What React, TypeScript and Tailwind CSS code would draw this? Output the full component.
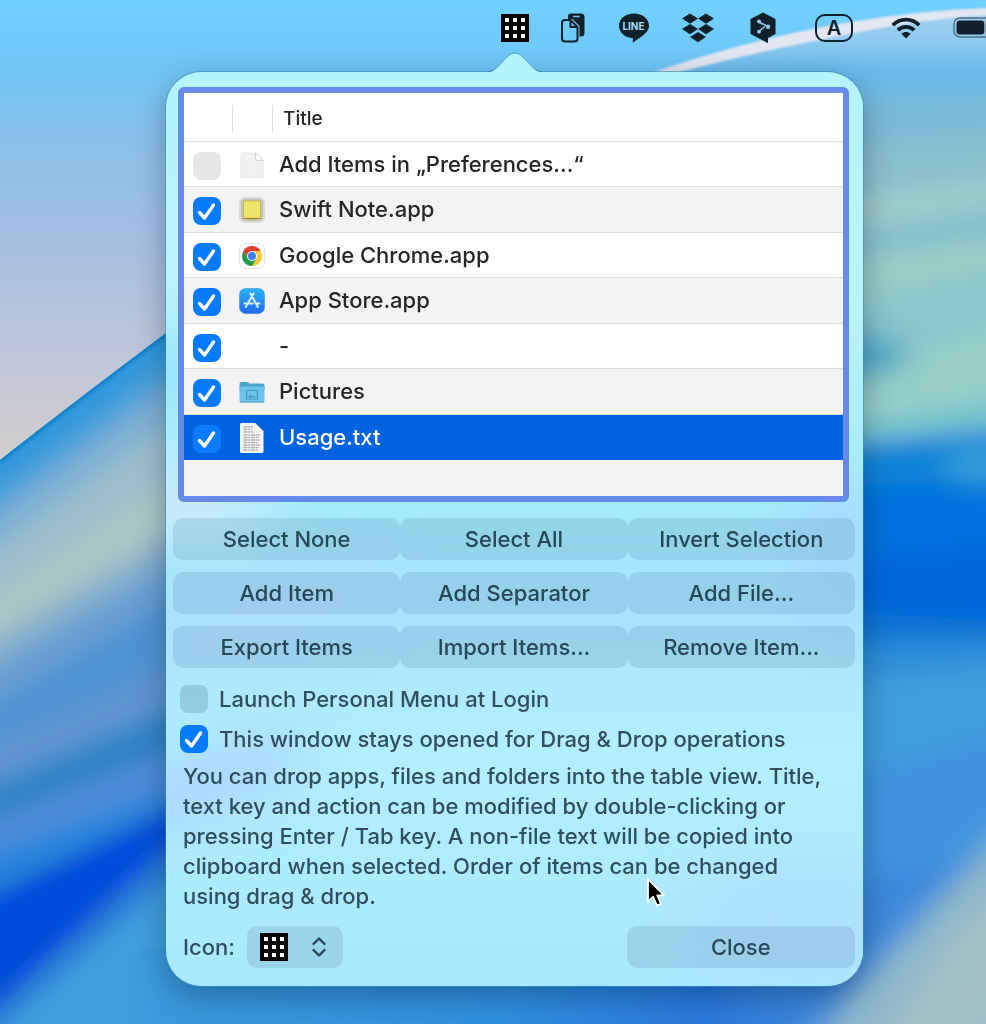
import { useState } from "react";

type Kind = "blank" | "note" | "chrome" | "store" | "none" | "folder" | "text";
type Item = { id: number; title: string; kind: Kind; enabled: boolean };

const ITEMS: Item[] = [
  { id: 1, title: "Add Items in „Preferences...“", kind: "blank", enabled: false },
  { id: 2, title: "Swift Note.app", kind: "note", enabled: true },
  { id: 3, title: "Google Chrome.app", kind: "chrome", enabled: true },
  { id: 4, title: "App Store.app", kind: "store", enabled: true },
  { id: 5, title: "-", kind: "none", enabled: true },
  { id: 6, title: "Pictures", kind: "folder", enabled: true },
  { id: 7, title: "Usage.txt", kind: "text", enabled: true },
];

// each band covers everything below its upper edge: [colour, y at the left, y at the right]
const LEFT_BANDS: [string, number, number][] = [
  ["#4a9fd9", 478, 356],
  ["#7fb1d4", 508, 386],
  ["#9bbfce", 545, 425],
  ["#a9c7c6", 590, 480],
  ["#88b1cd", 634, 536],
  ["#689fd1", 662, 566],
  ["#4f93d0", 700, 604],
  ["#5f95cf", 735, 668],
  ["#2f83c6", 782, 712],
  ["#4f8bd8", 816, 752],
  ["#2585dc", 850, 792],
  ["#004cda", 890, 812],
  ["#2c80d8", 1004, 852],
  ["#419fdc", 1030, 884],
];

const RIGHT_BANDS: [string, number, number][] = [
  ["#68b9ea", 62, 62],
  ["#79bad8", 92, 88],
  ["#8abfcf", 140, 132],
  ["#a0cccb", 196, 180],
  ["#84c0cf", 232, 208],
  ["#9ccec6", 258, 240],
  ["#8bc7ce", 300, 272],
  ["#98cfc8", 376, 330],
  ["#78c5d0", 420, 400],
  ["#0a84d8", 444, 430],
  ["#0072de", 486, 480],
  ["#0068da", 560, 545],
  ["#0f76d6", 612, 622],
  ["#2f8fd8", 644, 640],
  ["#419edc", 680, 668],
  ["#3f93e0", 780, 740],
  ["#3c88dc", 880, 860],
];

function Wallpaper() {
  return (
    <svg className="absolute inset-0 -z-10 h-full w-full" viewBox="0 0 986 1024" preserveAspectRatio="none" aria-hidden="true">
      <defs>
        <linearGradient id="sky" x1="0" y1="0" x2="0" y2="470" gradientUnits="userSpaceOnUse">
          <stop offset="0" stopColor="#70d1ff" />
          <stop offset=".14" stopColor="#70c6f5" />
          <stop offset=".32" stopColor="#8ec0e8" />
          <stop offset=".55" stopColor="#a9c0e1" />
          <stop offset=".76" stopColor="#bfc7da" />
          <stop offset="1" stopColor="#d6cfcb" />
        </linearGradient>
        <linearGradient id="under" x1="0" y1="0" x2="0" y2="100" gradientUnits="userSpaceOnUse">
          <stop offset="0" stopColor="#a8d6f2" />
          <stop offset=".4" stopColor="#8fcaf0" />
          <stop offset="1" stopColor="#68b9ea" />
        </linearGradient>
        <linearGradient id="floor" x1="110" y1="0" x2="986" y2="0" gradientUnits="userSpaceOnUse">
          <stop offset="0" stopColor="#3a9adc" stopOpacity="0" />
          <stop offset=".06" stopColor="#3a9adc" />
          <stop offset=".45" stopColor="#2f90de" />
          <stop offset=".68" stopColor="#2a78dc" />
          <stop offset=".85" stopColor="#3c82d8" stopOpacity="0" />
        </linearGradient>
        <filter id="soft" x="-10%" y="-10%" width="120%" height="120%">
          <feGaussianBlur stdDeviation="11" />
        </filter>
        <filter id="haze" x="-100%" y="-200%" width="300%" height="500%">
          <feGaussianBlur stdDeviation="15" />
        </filter>
        <filter id="fine">
          <feGaussianBlur stdDeviation="1" />
        </filter>
        <clipPath id="leftHill">
          <path d="M0 460Q70 405 166 333L520 90V1024H0Z" />
        </clipPath>
        <clipPath id="rightHill">
          <path d="M520 110Q660 72 742 50Q860 20 986 14V1024H520Z" />
        </clipPath>
      </defs>
      <rect width="986" height="1024" fill="url(#sky)" />
      <g clipPath="url(#leftHill)">
        <rect y="80" width="530" height="944" fill="#2b97dd" />
        <g filter="url(#soft)">
          {LEFT_BANDS.map(([fill, a, b]) => (
            <polygon key={fill + a} fill={fill} points={`-165,${a * 2 - b} 0,${a} 165,${b} 600,${b - (a - b)} 600,1120 -165,1120`} />
          ))}
        </g>
        <path d="M0 461Q70 406 166 334" fill="none" stroke="#1584cc" strokeWidth="5" filter="url(#fine)" />
      </g>
      <g clipPath="url(#rightHill)">
        <rect x="500" width="486" height="1024" fill="url(#under)" />
        <g filter="url(#soft)">
          {RIGHT_BANDS.map(([fill, a, b]) => (
            <polygon key={fill + a} fill={fill} points={`500,${a + 10} 850,${a} 986,${b} 1100,${b} 1100,1120 500,1120`} />
          ))}
        </g>
        <ellipse cx="862" cy="356" rx="46" ry="14" fill="#2f90c4" opacity=".8" filter="url(#haze)" />
        <ellipse cx="990" cy="465" rx="50" ry="20" fill="#5ab4dc" opacity=".6" filter="url(#haze)" />
        <path d="M740 1110L840 1000L1000 830H1120V1110Z" fill="#8fb8cd" filter="url(#haze)" />
        <path d="M860 1080L960 930L1060 850V1000Z" fill="#a2c4c6" filter="url(#haze)" />
      </g>
      <rect x="110" y="950" width="876" height="74" fill="url(#floor)" />
      <path d="M640 77Q745 40 845 23Q920 10 990 8V15Q920 19 845 35Q755 52 680 72Z" fill="#e2e7f3" filter="url(#fine)" />
    </svg>
  );
}

function GridIcon() {
  return (
    <svg width="28" height="28" viewBox="0 0 28 28" aria-hidden="true">
      <rect width="28" height="28" fill="#000" />
      {[4, 12, 20].map((y) =>
        [4, 12, 20].map((x) => <rect key={`${x}-${y}`} x={x} y={y} width="4" height="4" fill="#fff" />)
      )}
    </svg>
  );
}

function MenuBar() {
  return (
    <header className="flex h-14 items-center justify-end gap-7 text-[#10202c]">
      <GridIcon />
      <span className="flex w-[31px] justify-center">
        <svg width="24" height="30" viewBox="0 0 24 30" aria-hidden="true">
          <path d="M10 .5H20Q23.500 .5 23.500 4V20Q23.500 23.500 20 23.500H18.500V13L11.500 6H7V3.500Q7 .5 10 .5Z" fill="currentColor" />
          <path d="M12.500 3.500H18" stroke="#6fc8f6" strokeWidth="1.600" strokeLinecap="round" />
          <path d="M10.500 7.500L16.500 13.500H10.500Z" fill="#6fc8f6" />
          <path d="M4 7H9.500L16.500 14V25.500Q16.500 28.500 13.500 28.500H4Q1 28.500 1 25.500V10Q1 7 4 7ZM9.500 7V14H16.500" fill="none" stroke="currentColor" strokeWidth="2" strokeLinejoin="round" />
        </svg>
      </span>
      <span className="relative flex w-[35px] justify-center">
        <svg width="32" height="30" viewBox="0 0 32 30" aria-hidden="true">
          <path d="M16 .5C24.300 .5 31 5.900 31 12.700C31 18 26 22 21 25.200L15.500 29.300Q14.500 29.700 14.700 28.500L15 25.200C7 24.800 1 19.400 1 12.700C1 5.900 7.700 .5 16 .5Z" fill="currentColor" />
        </svg>
        <span className="absolute inset-x-0 top-[7px] text-center text-[10px] leading-3 font-bold text-[#a5dcf8]">LINE</span>
      </span>
      <span className="flex w-[38px] justify-center">
        <svg width="34" height="30" viewBox="0 0 34 30" fill="currentColor" aria-hidden="true">
          <path d="M9 .5L17 5.600L9 10.700L1 5.600ZM25 .5L33 5.600L25 10.700L17 5.600ZM9 11L17 16.100L9 21.200L1 16.100ZM25 11L33 16.100L25 21.200L17 16.100ZM17 19L25 24.100L17 29.200L9 24.100Z" />
        </svg>
      </span>
      <span className="flex w-9 justify-center">
        <svg width="26" height="32" viewBox="0 0 26 32" aria-hidden="true">
          <path d="M13 .5L25.500 7V22L18 26V31.300L13 28.500L.5 22V7Z" fill="currentColor" />
          <path d="M8 9.500L12.500 12M15 14.500L8 19.800" fill="none" stroke="#8fcbf0" strokeWidth="1.500" />
          <path d="M12 11.500L18 14.700" stroke="#8fcbf0" strokeWidth="1.500" />
          <g fill="#8fcbf0">
            <circle cx="9" cy="9.500" r="1.900" />
            <circle cx="18" cy="14.700" r="2.200" />
            <circle cx="9" cy="19.800" r="1.900" />
          </g>
        </svg>
      </span>
      <span className="flex w-[50px] justify-center">
        <span className="flex h-7 w-[38px] items-center justify-center rounded-[10px] border-2 border-current text-[20px] leading-6 font-semibold">A</span>
      </span>
      <span className="flex w-[38px] justify-center">
        <svg width="30" height="24" viewBox="0 0 30 24" fill="none" stroke="currentColor" strokeWidth="3.800" aria-hidden="true">
          <path d="M1.800 9.200C9 1.800 21 1.800 28.200 9.200" />
          <path d="M6.800 14.200C11.500 9.800 18.500 9.800 23.200 14.200" />
          <path d="M15 22.500L10.300 17.800C13 15.500 17 15.500 19.700 17.800Z" fill="currentColor" stroke="none" />
        </svg>
      </span>
      <svg width="33" height="22" viewBox="0 0 33 22" aria-hidden="true">
        <rect x="1" y="1" width="48" height="19" rx="6" fill="none" stroke="#4d7085" strokeWidth="1.500" />
        <rect x="3.500" y="3.500" width="28" height="14" rx="3.500" fill="currentColor" />
        <rect x="31.500" y="3.500" width="2" height="14" fill="#8eb0c2" />
      </svg>
    </header>
  );
}

function ItemIcon({ kind }: { kind: Kind }) {
  switch (kind) {
    case "blank":
      return (
        <svg width="26" height="28" viewBox="0 0 26 28" aria-hidden="true">
          <path d="M4 2H17L24 9V25Q24 26.500 22.500 26.500H3.500Q2 26.500 2 25V4Q2 2 4 2Z" fill="#f1f1f1" stroke="#e2e2e2" strokeWidth=".8" />
          <path d="M16.500 2V8Q16.500 9.500 18 9.500H24Z" fill="#fff" stroke="#c9c9c9" strokeWidth=".8" />
        </svg>
      );
    case "note":
      return (
        <svg width="26" height="28" viewBox="0 0 26 28" aria-hidden="true">
          <rect x="0" y="1" width="26" height="26" rx="6" fill="#dcdad9" />
          <rect x="2" y="3" width="22" height="22" rx="4" fill="#c4c1bb" />
          <rect x="4.500" y="5" width="17" height="17.500" fill="#f2e468" stroke="#cbb94c" />
          <path d="M4.500 22.500H21.500" stroke="#a08c20" strokeWidth="1.200" />
        </svg>
      );
    case "chrome":
      return (
        <svg width="26" height="28" viewBox="0 0 26 28" aria-hidden="true">
          <rect x=".5" y="1.500" width="25" height="25" rx="6" fill="#fff" stroke="#e4e4e4" />
          <path d="M13 14L4.340 9A10 10 0 0 1 21.660 9Z" fill="#e33b2e" />
          <path d="M13 14L21.660 9A10 10 0 0 1 13 24Z" fill="#fcc934" />
          <path d="M13 9H21.660L17.330 16.500Z" fill="#fcc934" />
          <path d="M8.670 16.500L4.340 9L13 9Z" fill="#e33b2e" />
          <path d="M4.340 9L8.670 16.500H17.330L13 24A10 10 0 0 1 4.340 9Z" fill="#1e9c4c" />
          <circle cx="13" cy="14" r="5" fill="#fff" />
          <circle cx="13" cy="14" r="4" fill="#3f7de8" />
        </svg>
      );
    case "store":
      return (
        <svg width="26" height="28" viewBox="0 0 26 28" aria-hidden="true">
          <defs>
            <linearGradient id="storeFill" x1="0" y1="0" x2="0" y2="1">
              <stop offset="0" stopColor="#2bb4f8" />
              <stop offset="1" stopColor="#2168ee" />
            </linearGradient>
          </defs>
          <rect x=".5" y="1.500" width="25" height="25" rx="6" fill="url(#storeFill)" stroke="#3b8fe0" strokeWidth=".6" />
          <path d="M11.500 6.500L18.800 20M14.500 6.500L8 17.800M5.500 16.500H14M17.500 16.500H20.500M6.800 20L7.300 19.200" stroke="#d9f0ff" strokeWidth="2" strokeLinecap="round" />
        </svg>
      );
    case "folder":
      return (
        <svg width="26" height="28" viewBox="0 0 26 28" aria-hidden="true">
          <path d="M.5 6Q.5 4 2.500 4H8Q9.500 4 10.500 5.500H23.500Q25.500 5.500 25.500 7.500V12H.5Z" fill="#4aa5cc" />
          <path d="M.5 8.500H25.500V22.500Q25.500 24.500 23.500 24.500H2.500Q.5 24.500 .5 22.500Z" fill="#6cc5e8" />
          <path d="M1 24H25" stroke="#4aa5cc" />
          <rect x="7.500" y="12.500" width="11" height="8.500" rx="1" fill="none" stroke="#3f9cc6" strokeWidth="1.200" />
          <path d="M8.500 19.500L11.500 16.500L13.500 18.500L15 17.500L17.500 19.500Z" fill="#3f9cc6" />
        </svg>
      );
    case "text":
      return (
        <svg width="26" height="30" viewBox="0 0 26 30" aria-hidden="true">
          <path d="M2 0H16L24.500 8.500V28.500Q24.500 30 23 30H2.500Q1 30 1 28.500V1.500Q1 0 2 0Z" fill="#f4f4f4" />
          <path d="M16 0V7Q16 8.500 17.500 8.500H24.500Z" fill="#fff" stroke="#d0d0d0" strokeWidth=".5" />
          <path d="M4.500 4H14M4.500 6.500H13M4.500 9H14.500M4.500 12H21M4.500 14.500H20M4.500 17H21M4.500 19.500H19M4.500 22H21M4.500 24.500H20M4.500 27H19" stroke="#b0b0b0" strokeWidth="1.500" strokeDasharray="4 .7 2 .7" />
        </svg>
      );
    default:
      return null;
  }
}

type CheckProps = { id?: string; label?: string; checked: boolean; onChange: () => void; tone: string };

function Check({ id, label, checked, onChange, tone }: CheckProps) {
  return (
    <span className="relative block size-7">
      <input id={id} type="checkbox" aria-label={label} checked={checked} onChange={onChange}
        className={`block size-7 appearance-none rounded-lg ${tone}`} />
      {checked && (
        <svg className="pointer-events-none absolute inset-0" width="28" height="28" viewBox="0 0 28 28" aria-hidden="true">
          <path d="M6.500 15.500L11.500 21L20.500 8" fill="none" stroke="#fff" strokeWidth="3.400" strokeLinecap="round" strokeLinejoin="round" />
        </svg>
      )}
    </span>
  );
}

function ItemTable() {
  const [items, setItems] = useState(ITEMS);
  const [selected, setSelected] = useState(7);
  const toggle = (id: number) => setItems(items.map((i) => (i.id === id ? { ...i, enabled: !i.enabled } : i)));
  return (
    <div className="mr-[14px] ml-3 rounded-md border-[6px] border-[#668ae9] bg-[#f3f3f3] pb-9">
      <table className="w-full table-fixed border-collapse text-left text-[#262626]">
        <colgroup>
          <col className="w-[49px]" />
          <col className="w-10" />
          <col />
        </colgroup>
        <thead>
          <tr className="h-12 border-b border-[#dedede] bg-white">
            <th className="p-0 pt-1" aria-label="Enabled"><div className="h-7 border-r border-[#dcdcdc]" /></th>
            <th className="p-0 pt-1" aria-label="Icon"><div className="h-7 border-r border-[#dcdcdc]" /></th>
            <th className="pt-1 pr-0 pb-0 pl-2.5 text-[19px] leading-6 font-[450]">Title</th>
          </tr>
        </thead>
        <tbody>
          {items.map((item) => (
            <tr key={item.id} onClick={() => setSelected(item.id)}
              className={item.id === selected
                ? "h-[46px] bg-[#0064e1] font-medium text-white"
                : "border-b border-[#dedede] font-[450] odd:h-[45px] odd:bg-white even:h-[46px] even:bg-[#f3f3f3]"}>
              <td className="pt-1 pr-0 pb-0 pl-[9px]">
                <Check label={`Show ${item.title}`} checked={item.enabled} onChange={() => toggle(item.id)}
                  tone={item.id === selected ? "bg-[#e6e6e8] checked:bg-[#0a7aff]" : "bg-[#e6e6e8] checked:bg-[#047aff]"} />
              </td>
              <td className="pt-0.5 pr-0 pb-0 pl-1.5"><ItemIcon kind={item.kind} /></td>
              <td className="truncate py-0 pr-0 pl-1.5 text-[22px] leading-7">{item.title}</td>
            </tr>
          ))}
        </tbody>
      </table>
    </div>
  );
}

const ACTIONS = [
  "Select None", "Select All", "Invert Selection",
  "Add Item", "Add Separator", "Add File...",
  "Export Items", "Import Items...", "Remove Item...",
];

function PushButton({ children }: { children: string }) {
  return (
    <button type="button" className="h-[42px] w-full rounded-[10px] bg-[#0a1e46]/10 text-center text-[22px] leading-7 font-[450] text-[#27485a]">
      {children}
    </button>
  );
}

function PanelGlow() {
  return (
    <svg className="absolute inset-0 -z-10 h-full w-full rounded-[36px]" viewBox="0 0 698 918" preserveAspectRatio="none" aria-hidden="true">
      <defs>
        <linearGradient id="glass" x1="0" y1="0" x2="0" y2="1">
          <stop offset="0" stopColor="#b3f4fe" />
          <stop offset=".25" stopColor="#b8f4fe" />
          <stop offset=".5" stopColor="#a4e9fe" />
          <stop offset=".6" stopColor="#a8e4fe" />
          <stop offset=".75" stopColor="#b2effe" />
          <stop offset="1" stopColor="#a8e8ff" />
        </linearGradient>
        <filter id="glow" x="-50%" y="-50%" width="200%" height="200%">
          <feGaussianBlur stdDeviation="26" />
        </filter>
      </defs>
      <rect width="698" height="918" fill="url(#glass)" />
      <g filter="url(#glow)">
        <ellipse cx="0" cy="300" rx="30" ry="40" fill="#8fdffa" />
        <ellipse cx="20" cy="435" rx="90" ry="30" fill="#d0ecfd" />
        <ellipse cx="110" cy="545" rx="120" ry="30" fill="#b0e0ff" transform="rotate(-20 110 545)" />
        <ellipse cx="40" cy="715" rx="110" ry="34" fill="#acd6ff" transform="rotate(-20 40 715)" />
        <ellipse cx="690" cy="480" rx="60" ry="70" fill="#a6dcff" />
        <ellipse cx="640" cy="850" rx="120" ry="60" fill="#aee1ff" />
      </g>
    </svg>
  );
}

export default function App() {
  const [launch, setLaunch] = useState(false);
  const [stayOpen, setStayOpen] = useState(true);
  return (
    <div className="relative isolate min-h-screen overflow-hidden pb-9 font-['Inter','Noto_Sans',sans-serif]">
      <Wallpaper />
      <MenuBar />
      <main className="relative isolate mt-[15px] mr-[122px] ml-[165px] rounded-[36px] border border-[#2f7f9c]/60 pt-[15px] pb-[18px] font-[450] shadow-[0_10px_30px_rgba(0,30,60,0.35),inset_0_0_2px_1px_rgba(255,255,255,0.5)]">
        <PanelGlow />
        <svg className="absolute -top-5 left-1/2 -ml-[27px]" width="54" height="22" viewBox="0 0 54 22" aria-hidden="true">
          <path d="M0 20.500C5 20 8 17 11 13.500L19 5Q23 1 27 1Q31 1 35 5L43 13.500C46 17 49 20 54 20.500V22H0Z" fill="#b3f4fe" />
          <path d="M0 19.500C5 19 8 17 11 13.500L19 5Q23 1 27 1Q31 1 35 5L43 13.500C46 17 49 19 54 19.500" fill="none" stroke="#2f7f9c" strokeOpacity=".6" />
        </svg>
        <ItemTable />
        <div className="mt-4 mr-2 ml-[7px] grid grid-cols-3 gap-y-3">
          {ACTIONS.map((name) => <PushButton key={name}>{name}</PushButton>)}
        </div>
        <div className="mt-[17px] ml-[14px] flex flex-col gap-3 text-[22px] leading-7 text-[#2f4f5e]">
          <div className="flex items-center gap-[11px]">
            <Check id="launch" checked={launch} onChange={() => setLaunch(!launch)} tone="bg-[#0a1e46]/15 checked:bg-[#047aff]" />
            <label htmlFor="launch">Launch Personal Menu at Login</label>
          </div>
          <div className="flex items-center gap-[11px]">
            <Check id="stay" checked={stayOpen} onChange={() => setStayOpen(!stayOpen)} tone="bg-[#0a1e46]/15 checked:bg-[#047aff]" />
            <label htmlFor="stay">This window stays opened for Drag &amp; Drop operations</label>
          </div>
        </div>
        <p className="mt-2 mr-8 ml-[17px] text-[22px] leading-[30px] text-[#2f4f5e]">
          You can drop apps, files and folders into the table view. Title, text key and action can be modified by
          double-clicking or pressing Enter / Tab key. A non-file text will be copied into clipboard when selected.
          Order of items can be changed using drag &amp; drop.
        </p>
        <div className="mt-[15px] mr-2 ml-[17px] flex items-center text-[22px] leading-7 text-[#2f4f5e]">
          <label htmlFor="icon">Icon:</label>
          <span className="relative ml-3 block">
            <select id="icon" className="block h-[42px] w-24 appearance-none rounded-[10px] bg-[#0a1e46]/10 text-transparent">
              <option>▦</option>
            </select>
            <span className="pointer-events-none absolute inset-0 flex items-center justify-between pr-[17px] pl-[13px]">
              <GridIcon />
              <svg width="14" height="20" viewBox="0 0 14 20" fill="none" stroke="#27485a" strokeWidth="2.400" strokeLinecap="round" strokeLinejoin="round" aria-hidden="true">
                <path d="M1.500 7L7 1.500L12.500 7M1.500 13L7 18.500L12.500 13" />
              </svg>
            </span>
          </span>
          <div className="ml-auto w-[34%]">
            <PushButton>Close</PushButton>
          </div>
        </div>
        <svg className="absolute top-[804px] left-[479px]" width="24" height="36" viewBox="0 0 24 36" aria-hidden="true">
          <path d="M3 3V25.500L8 20.800L12 29.500L16 27.800L12.300 19.300H19Z" fill="#000" stroke="#fff" strokeWidth="1.800" strokeLinejoin="round" />
        </svg>
      </main>
    </div>
  );
}
